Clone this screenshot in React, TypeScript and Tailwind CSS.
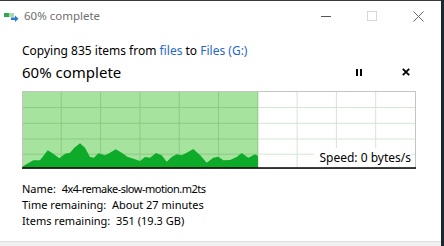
import React from "react";

const wave: [number, number][] = [
  [0, 76], [1.3, 75], [11.3, 69.3], [18, 69.3], [25.7, 59.3], [31.3, 62.7], [37.3, 67.3], [43, 62.7],
  [48, 61.7], [52.3, 56.7], [58, 52.3], [63, 56.7], [68, 66], [72, 66.7], [76.3, 62.3], [83, 64.3],
  [88, 61.7], [93.7, 58.3], [99.7, 61.7], [105.3, 65.7], [113, 68.3], [118, 70], [123, 66], [128, 66.7],
  [134, 62], [139.7, 64.3], [144.7, 70.7], [149.7, 66], [154.7, 63.3], [159.7, 64.3], [164.7, 61.7],
  [171.3, 58], [178, 64], [184.7, 71.7], [191.3, 66.7], [196.3, 65.7], [201.3, 69.3], [208, 69],
  [214.7, 66], [219.7, 62], [226.3, 66.7], [233, 63.3], [236, 65], [236, 77], [0, 77],
];

function Chart() {
  const cols = Array.from({ length: 9 }, (_, i) => (i + 1) * 39.3);
  const rows = [16.5, 32.3, 48, 63.2];
  return (
    <div className="relative w-[394px] h-[78px]">
      <svg width="394" height="78" viewBox="0 0 394 78" className="block">
        <rect x="0" y="0" width="394" height="78" fill="#ffffff" />
        <rect x="0" y="0" width="236" height="78" fill="#a6e39e" />
        {cols.map((x) =>
          x < 236 ? (
            <line key={x} x1={x} y1="0" x2={x} y2="78" stroke="#8ccb84" strokeWidth="1" />
          ) : (
            <line key={x} x1={x} y1="0" x2={x} y2="78" stroke="#d3e6d3" strokeWidth="1" />
          )
        )}
        {rows.map((y) => (
          <g key={y}>
            <line x1="0" y1={y} x2="236" y2={y} stroke="#8ccb84" strokeWidth="1" />
            <line x1="236" y1={y} x2="394" y2={y} stroke="#d3e6d3" strokeWidth="1" />
          </g>
        ))}
        <polygon
          points={wave.map((p) => p.join(",")).join(" ")}
          fill="#0eab2b"
          strokeLinejoin="round"
        />
        <rect x="0.5" y="0.5" width="393" height="77" fill="none" stroke="#c4c4c4" strokeWidth="1" />
        <line x1="0" y1="77" x2="394" y2="77" stroke="#000000" strokeWidth="1.6" />
      </svg>
      <div className="absolute right-[5px] bottom-[2px] h-[19px] bg-white pl-[5px] flex items-center text-[12px] leading-none text-black">
        Speed: 0 bytes/s
      </div>
    </div>
  );
}

export default function App() {
  return (
    <div
      className="w-[444px] h-[246px] flex overflow-hidden bg-[#1d2633]"
      style={{ fontFamily: '"Noto Sans", "Open Sans", sans-serif' }}
    >
      <div className="w-[441px] h-full flex flex-col bg-white border-t border-[#3a3a3a]">
        {/* title bar */}
        <div className="h-[30px] flex items-center pl-[4px] shrink-0">
          <svg width="15" height="10" viewBox="0 0 15 10" className="mt-[1px]">
            <rect x="0" y="1" width="5" height="4" fill="#2fa84f" />
            <rect x="5" y="1" width="5" height="4" fill="#a9d8a9" />
            <path d="M7 5.5 h4 v-2 l3.5 3.2 l-3.5 3.2 v-2 h-4 z" fill="#2a78d0" />
          </svg>
          <span className="ml-[5px] text-[11.5px] text-[#707070] leading-none">60% complete</span>
          <div className="flex-1" />
          <div className="w-[46px] h-[30px] flex items-center justify-center">
            <div className="w-[10px] h-[1px] bg-[#555]" />
          </div>
          <div className="w-[46px] h-[30px] flex items-center justify-center">
            <div className="w-[10px] h-[10px] border border-[#d8d8d8]" />
          </div>
          <div className="w-[46px] h-[30px] flex items-center justify-center">
            <svg width="11" height="11" viewBox="0 0 11 11">
              <path d="M0.5 0.5 L10.5 10.5 M10.5 0.5 L0.5 10.5" stroke="#666" strokeWidth="1" />
            </svg>
          </div>
        </div>

        <div className="pl-[22px] flex flex-col">
          <div className="mt-[12px] h-[16px] flex items-center text-[12px] leading-none text-black">
            Copying 835 items from&nbsp;<span className="text-[#1f68c4]">files</span>&nbsp;to&nbsp;
            <span className="text-[#1f68c4]">Files (G:)</span>
          </div>
          <div className="h-[22px] flex items-center mt-[2px]">
            <span className="text-[15px] leading-none text-black">60% complete</span>
            <div className="flex-1" />
            <div className="flex gap-[2px] mr-[40px]">
              <div className="w-[2px] h-[7px] bg-black" />
              <div className="w-[2px] h-[7px] bg-black" />
            </div>
            <svg width="8" height="8" viewBox="0 0 8 8" className="mr-[31px]">
              <path d="M0.8 0.8 L7.2 7.2 M7.2 0.8 L0.8 7.2" stroke="#000" strokeWidth="1.8" />
            </svg>
          </div>
          <div className="mt-[8px]">
            <Chart />
          </div>
          <div className="mt-[12px] flex flex-col text-[11px] text-black">
            <div className="h-[16px] flex items-center">
              Name:&nbsp;&nbsp;<span className="tracking-[-0.5px]">4x4-remake-slow-motion.m2ts</span>
            </div>
            <div className="h-[16px] flex items-center">Time remaining:&nbsp; About 27 minutes</div>
            <div className="h-[16px] flex items-center">Items remaining:&nbsp; 351 (19.3 GB)</div>
          </div>
        </div>
        <div className="flex-1" />
        <div className="h-[5px] shrink-0 border-t border-[#dcdcdc] bg-[#f0f0f0]" />
      </div>
      <div className="flex-1" />
    </div>
  );
}
